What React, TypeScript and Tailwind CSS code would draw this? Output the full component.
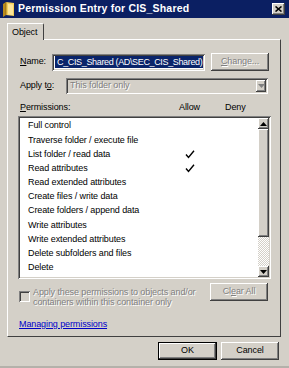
import React from 'react';

const raised =
  'shadow-[inset_-1px_-1px_#404040,inset_1px_1px_#ffffff,inset_-2px_-2px_#808080,inset_2px_2px_#d4d0c8]';
const sunken =
  'shadow-[inset_1px_1px_#808080,inset_-1px_-1px_#ffffff,inset_2px_2px_#404040,inset_-2px_-2px_#d4d0c8]';
const disabledText = 'text-[#808080] [text-shadow:1px_1px_0_#ffffff]';

const permissions = [
  { name: 'Full control', allow: false },
  { name: 'Traverse folder / execute file', allow: false },
  { name: 'List folder / read data', allow: true },
  { name: 'Read attributes', allow: true },
  { name: 'Read extended attributes', allow: false },
  { name: 'Create files / write data', allow: false },
  { name: 'Create folders / append data', allow: false },
  { name: 'Write attributes', allow: false },
  { name: 'Write extended attributes', allow: false },
  { name: 'Delete subfolders and files', allow: false },
  { name: 'Delete', allow: false },
];

function Check() {
  return (
    <svg width="10" height="9" viewBox="0 0 10 9">
      <path d="M1 4.5 L3.5 7.5 L9 0.8" fill="none" stroke="#000" strokeWidth="1.4" />
    </svg>
  );
}

function Arrow({ up, color = '#000' }: { up?: boolean; color?: string }) {
  return (
    <svg width="7" height="4" viewBox="0 0 7 4">
      {up ? <path d="M0 4 L3.5 0 L7 4 Z" fill={color} /> : <path d="M0 0 L7 0 L3.5 4 Z" fill={color} />}
    </svg>
  );
}

function App() {
  return (
    <div className="w-[289px] h-[368px] bg-[#d4d0c8] flex flex-col overflow-hidden font-['Liberation_Sans',Arial,sans-serif] text-[9px] tracking-[-0.1px] text-black border-b-2 border-[#b4b1aa]">
      {/* Title bar */}
      <div className="h-[18px] bg-[#0b1f62] flex items-center pl-[3px] pr-[4px] shrink-0">
        <svg width="11" height="15" viewBox="0 0 11 15">
          <path d="M0 2 L3 0 L3 13 L0 15 Z" fill="#b88a1c" />
          <path d="M3 0 L11 1 L11 14 L3 13 Z" fill="#f3cf5a" />
          <path d="M3 0 L3 13" stroke="#8a6410" strokeWidth="0.8" />
          <path d="M5 2 L10 2.5 L10 13 L5 12.5 Z" fill="#fbe59a" />
        </svg>
        <span className="ml-[4px] text-white font-bold text-[10.5px] tracking-[0.2px]">Permission Entry for CIS_Shared</span>
        <div className={`ml-auto w-[13px] h-[12px] bg-[#d4d0c8] flex items-center justify-center ${raised}`}>
          <svg width="7" height="6" viewBox="0 0 7 6">
            <path d="M0.5 0.5 L6.5 5.5 M6.5 0.5 L0.5 5.5" stroke="#000" strokeWidth="1.6" />
          </svg>
        </div>
      </div>

      {/* Tab */}
      <div className="mt-[5px] px-[7px] flex shrink-0">
        <div className="relative z-10 w-[37px] h-[17px] -mb-[1px] bg-[#d4d0c8] border-l border-t border-white border-r border-r-[#404040] rounded-tr-[2px] flex items-center pl-[4px]">
          <span className="leading-none">Object</span>
        </div>
      </div>

      {/* Panel */}
      <div className="mx-[7px] w-[274px] h-[298px] border border-t-white border-l-white border-r-[#404040] border-b-[#404040] flex flex-col px-[10px] shrink-0">
        {/* Name */}
        <div className="mt-[13px] h-[18px] flex items-center">
          <span className="w-[34px] pl-[2px]">
            <span className="underline">N</span>ame:
          </span>
          <div className={`w-[153px] h-[17px] bg-white flex items-center pl-[3px] pr-[2px] overflow-hidden ${sunken}`}>
            <span className="bg-[#0a246a] text-white leading-[12px] px-[2px] whitespace-nowrap tracking-[-0.35px] overflow-hidden">C_CIS_Shared (AD\SEC_CIS_Shared)</span>
          </div>
          <div className={`ml-[6px] w-[58px] h-[18px] flex items-center justify-center ${raised} ${disabledText}`}>
            <span>
              <span className="underline">C</span>hange...
            </span>
          </div>
        </div>

        {/* Apply to */}
        <div className="mt-[7px] h-[16px] flex items-center">
          <span className="w-[48px] pl-[2px]">
            Apply t<span className="underline">o</span>:
          </span>
          <div className={`w-[202px] h-[16px] flex items-center pl-[4px] pr-[2px] ${sunken}`}>
            <span className={disabledText}>This folder only</span>
            <div className={`ml-auto w-[10px] h-[12px] bg-[#d4d0c8] flex items-center justify-center ${raised}`}>
              <Arrow color="#808080" />
            </div>
          </div>
        </div>

        {/* Header */}
        <div className="mt-[8px] h-[11px] flex items-center">
          <span className="w-[161px] pl-[2px]">
            <span className="underline">P</span>ermissions:
          </span>
          <span className="w-[46px]">Allow</span>
          <span>Deny</span>
        </div>

        {/* List */}
        <div className={`mt-[3px] w-[253px] h-[163px] bg-white flex p-[2px] ${sunken}`}>
          <div className="flex-1 pt-[1px] pl-[8px]">
            {permissions.map((p) => (
              <div key={p.name} className="h-[14.2px] flex items-center">
                <span className="w-[157px] whitespace-nowrap">{p.name}</span>
                <span className="w-[12px] flex items-center">{p.allow && <Check />}</span>
              </div>
            ))}
          </div>
          <div className="w-[11px] flex flex-col">
            <div className={`h-[11px] bg-[#d4d0c8] flex items-center justify-center ${raised}`}>
              <Arrow up />
            </div>
            <div className={`h-[108px] bg-[#d4d0c8] ${raised}`} />
            <div className="flex-1 bg-[repeating-conic-gradient(#ffffff_0_25%,#d4d0c8_0_50%)] bg-[length:2px_2px]" />
            <div className={`h-[11px] bg-[#d4d0c8] flex items-center justify-center ${raised}`}>
              <Arrow />
            </div>
          </div>
        </div>

        {/* Checkbox row */}
        <div className="mt-[4px] h-[24px] flex items-start">
          <div className={`mt-[8px] ml-[1px] w-[11px] h-[11px] bg-[#d4d0c8] shrink-0 ${sunken}`} />
          <div className={`ml-[3px] mt-[4px] leading-[10px] ${disabledText}`}>
            Apply these permissions to objects and/or
            <br />
            containers within this container only
          </div>
          <div className={`ml-auto mr-[2px] w-[58px] h-[18px] shrink-0 flex items-center justify-center ${raised} ${disabledText}`}>
            <span>
              Cl<span className="underline">e</span>ar All
            </span>
          </div>
        </div>

        <div className="mt-[12px] pl-[1px] leading-[11px]">
          <span className="text-[#0000c8] underline">Managing permissions</span>
        </div>
      </div>

      {/* Buttons */}
      <div className="mt-[5px] flex justify-end gap-[4px] pr-[10px] shrink-0">
        <div className={`w-[59px] h-[18px] flex items-center justify-center border border-black ${raised}`}>OK</div>
        <div className={`w-[58px] h-[18px] flex items-center justify-center ${raised}`}>Cancel</div>
      </div>
    </div>
  );
}

export default App;
